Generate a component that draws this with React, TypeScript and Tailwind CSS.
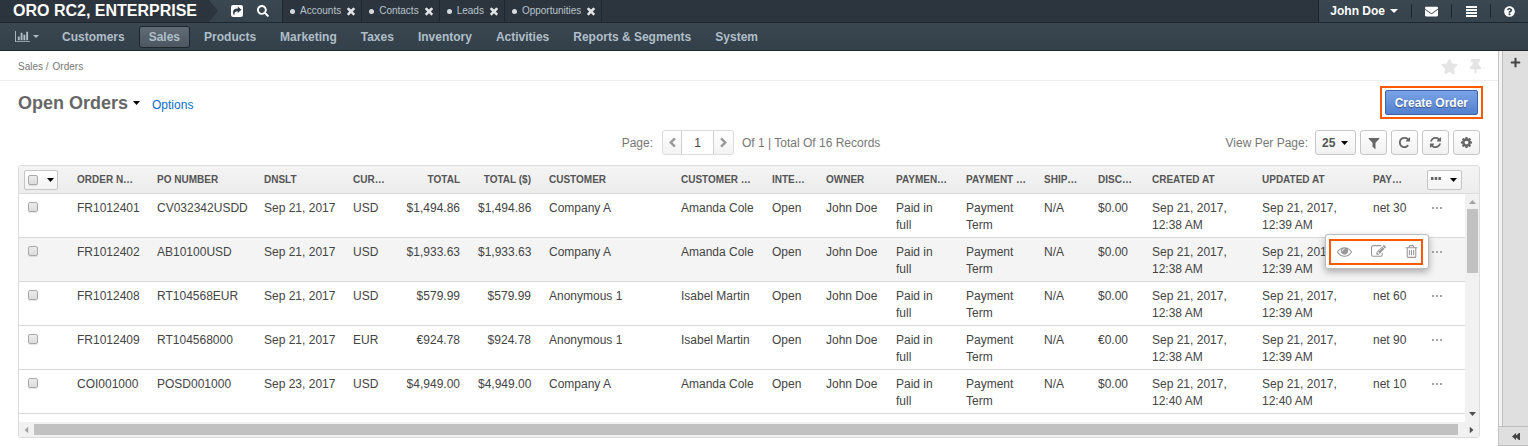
import React from "react";
import { FaEnvelope, FaPlus, FaQuestionCircle, FaSearch, FaStar, FaThumbtack } from "react-icons/fa";

const PATHS = {
  refresh:
    "M1639 1056q0 5-1 7-64 268-268 434.5t-478 166.5q-146 0-282.5-55t-243.5-157l-129 129q-19 19-45 19t-45-19-19-45v-448q0-26 19-45t45-19h448q26 0 45 19t19 45-19 45l-137 137q71 66 161 102t187 36q134 0 250-65t186-179q11-17 53-117 8-23 30-23h192q13 0 22.5 9.5t9.5 22.5zm25-800v448q0 26-19 45t-45 19h-448q-26 0-45-19t-19-45 19-45l138-138q-148-137-349-137-134 0-250 65t-186 179q-11 17-53 117-8 23-30 23h-199q-13 0-22.5-9.5t-9.5-22.5v-7q65-268 270-434.5t480-166.5q146 0 284 55.5t245 156.5l130-129q19-19 45-19t45 19 19 45z",
  repeat:
    "M1664 256v448q0 26-19 45t-45 19h-448q-42 0-59-40-17-39 14-69l138-138q-148-137-349-137-104 0-198.5 40.5t-163.5 109.5-109.5 163.5-40.5 198.5 40.5 198.5 109.5 163.5 163.5 109.5 198.5 40.5q119 0 225-52t179-147q7-10 23-12 15 0 25 9l137 138q9 8 9.5 20.5t-7.5 22.5q-109 132-264 204.5t-327 72.5q-156 0-298-61t-245-164-164-245-61-298 61-298 164-245 245-164 298-61q147 0 284.5 55.5t244.5 156.5l130-129q29-31 70-14 39 17 39 59z",
  edit:
    "M888 1184l116-116-152-152-116 116v56h96v96h56zm440-720q-16-16-33 1l-350 350q-17 17-1 33t33-1l350-350q17-17 1-33zm80 594v190q0 119-84.5 203.5t-203.5 84.5h-832q-119 0-203.5-84.5t-84.5-203.5v-832q0-119 84.5-203.5t203.5-84.5h832q63 0 117 25 15 7 18 23 3 17-9 29l-49 49q-14 14-32 8-23-6-45-6h-832q-66 0-113 47t-47 113v832q0 66 47 113t113 47h832q66 0 113-47t47-113v-126q0-13 9-22l64-64q15-15 35-7t20 29zm-96-738l288 288-672 672h-288v-288zm444 132l-92 92-288-288 92-92q28-28 68-28t68 28l152 152q28 28 28 68t-28 68z",
  trash:
    "M704 736v576q0 14-9 23t-23 9h-64q-14 0-23-9t-9-23v-576q0-14 9-23t23-9h64q14 0 23 9t9 23zm256 0v576q0 14-9 23t-23 9h-64q-14 0-23-9t-9-23v-576q0-14 9-23t23-9h64q14 0 23 9t9 23zm256 0v576q0 14-9 23t-23 9h-64q-14 0-23-9t-9-23v-576q0-14 9-23t23-9h64q14 0 23 9t9 23zm128 724v-948h-896v948q0 22 7 40.5t14.5 27 10.5 8.5h832q3 0 10.5-8.5t14.5-27 7-40.5zm-672-1076h448l-48-117q-7-9-17-11h-317q-10 2-17 11zm928 32v64q0 14-9 23t-23 9h-96v948q0 83-47 143.5t-113 60.5h-832q-66 0-113-58.5t-47-141.5v-952h-96q-14 0-23-9t-9-23v-64q0-14 9-23t23-9h309l70-167q15-37 54-63t79-26h320q40 0 79 26t54 63l70 167h309q14 0 23 9t9 23z",
  filter:
    "M1595 295q17 41-14 70l-493 493v742q0 42-39 59-13 5-25 5-27 0-45-19l-256-256q-19-19-19-45v-486l-493-493q-31-29-14-70 17-39 59-39h1280q42 0 59 39z",
  cog:
    "M1152 896q0-106-75-181t-181-75-181 75-75 181 75 181 181 75 181-75 75-181zm512-109v222q0 12-8 23t-20 13l-185 28q-19 54-39 91 35 50 107 138 10 12 10 25t-9 23q-27 37-99 108t-94 71q-12 0-26-9l-138-108q-44 23-91 38-16 136-29 186-7 28-36 28h-222q-14 0-24.5-8.5t-11.5-21.5l-28-184q-49-16-90-37l-141 107q-10 9-25 9-14 0-25-11-126-114-165-168-7-10-7-23 0-12 8-23 15-21 51-66.5t54-70.5q-27-50-41-99l-183-27q-13-2-21-12.5t-8-23.5v-222q0-12 8-23t19-13l186-28q14-46 39-92-40-57-107-138-10-12-10-24 0-10 9-23 26-36 98.5-107.5t94.5-71.5q13 0 26 10l138 107q44-23 91-38 16-136 29-186 7-28 36-28h222q14 0 24.5 8.5t11.5 21.5l28 184q49 16 90 37l142-107q9-9 24-9 13 0 25 10 129 119 165 170 7 8 7 22 0 12-8 23-15 21-51 66.5t-54 70.5q26 50 41 98l183 28q13 2 21 12.5t8 23.5z",
  eye:
    "M1664 960q-152-236-381-353 61 104 61 225 0 185-131.5 316.5t-316.5 131.5-316.5-131.5-131.5-316.5q0-121 61-225-229 117-381 353 133 205 333.5 326.5t434.5 121.5 434.5-121.5 333.5-326.5zm-720-384q0-20-14-34t-34-14q-125 0-214.5 89.5t-89.5 214.5q0 20 14 34t34 14 34-14 14-34q0-86 61-147t147-61q20 0 34-14t14-34zm848 384q0 34-20 69-140 230-376.5 368.5t-499.5 138.5-499.5-139-376.5-368q-20-35-20-69t20-69q140-229 376.5-368t499.5-139 499.5 139 376.5 368q20 35 20 69z",
  close:
    "M1490 1322q0 40-28 68l-136 136q-28 28-68 28t-68-28l-294-294-294 294q-28 28-68 28t-68-28l-136-136q-28-28-28-68t28-68l294-294-294-294q-28-28-28-68t28-68l136-136q28-28 68-28t68 28l294 294 294-294q28-28 68-28t68 28l136 136q28 28 28 68t-28 68l-294 294 294 294q28 28 28 68z",
};

function Icon({ name, className = "size-[14px]" }: { name: keyof typeof PATHS; className?: string }) {
  return (
    <svg viewBox="0 0 1792 1792" fill="currentColor" className={className} aria-hidden="true">
      <path d={PATHS[name]} />
    </svg>
  );
}

function ChartIcon() {
  return (
    <svg viewBox="0 0 2048 1792" fill="currentColor" className="h-[13px] w-[15px]" aria-hidden="true">
      <path d="M640 896v512h-256v-512h256zm384-512v1024h-256v-1024h256zm1024 1152v128h-2048v-1536h128v1408h1920zm-640-896v768h-256v-768h256zm384-384v1152h-256v-1152h256z" />
    </svg>
  );
}

function ShareIcon() {
  return (
    <svg viewBox="0 0 12 12" className="size-3" aria-hidden="true">
      <rect width="12" height="12" rx="2.2" fill="#fff" />
      <path d="M10.4 4.700 6.800 1.600v1.800C3.600 3.500 2 5 2 7.200c0 1.300.6 2.300 1.500 3-.4-2.500.6-3.800 3.300-3.900v1.700z" fill="#303b45" />
    </svg>
  );
}

function MenuIcon() {
  return (
    <svg viewBox="0 0 11 11" fill="currentColor" className="size-[11px]" aria-hidden="true">
      <path d="M0 0h11v2H0zM0 3h11v2H0zM0 6h11v2H0zM0 9h11v2H0z" />
    </svg>
  );
}

function Caret({ className = "h-1 w-[7px]" }: { className?: string }) {
  return (
    <svg viewBox="0 0 8 4" preserveAspectRatio="none" fill="currentColor" className={className} aria-hidden="true">
      <path d="M0 0h8L4 4z" />
    </svg>
  );
}

function Chevron({ left = false }: { left?: boolean }) {
  return (
    <svg viewBox="0 0 8 12" fill="none" stroke="currentColor" strokeWidth="2.8" className="h-[11px] w-[7px]" aria-hidden="true">
      <path d={left ? "M6.800 1.200 2 6l4.800 4.800" : "M1.200 1.200 6 6l-4.800 4.800"} />
    </svg>
  );
}

function Check({ label }: { label: string }) {
  return (
    <input
      type="checkbox"
      aria-label={label}
      className="block size-[10px] appearance-none rounded-[2px] border border-[#a9a9a9] bg-linear-to-b from-[#ececec] to-[#dcdcdc] shadow-[0_1px_1px_rgba(0,0,0,0.1)]"
    />
  );
}

const pinned = ["Accounts", "Contacts", "Leads", "Opportunities"];
const menu = ["Customers", "Sales", "Products", "Marketing", "Taxes", "Inventory", "Activities", "Reports & Segments", "System"];

type Column = { title: string; col: string; right?: boolean; wrap?: boolean };

const columns: Column[] = [
  { title: "ORDER N…", col: "w-[80px]" },
  { title: "PO NUMBER", col: "w-[107px]" },
  { title: "DNSLT", col: "w-[89px]" },
  { title: "CUR…", col: "w-[49px]" },
  { title: "TOTAL", col: "w-[76px]", right: true },
  { title: "TOTAL ($)", col: "w-[71px]", right: true },
  { title: "CUSTOMER", col: "w-[132px]" },
  { title: "CUSTOMER …", col: "w-[91px]" },
  { title: "INTE…", col: "w-[54px]" },
  { title: "OWNER", col: "w-[70px]" },
  { title: "PAYMEN…", col: "w-[70px]", wrap: true },
  { title: "PAYMENT …", col: "w-[78px]", wrap: true },
  { title: "SHIP…", col: "w-[54px]" },
  { title: "DISC…", col: "w-[54px]" },
  { title: "CREATED AT", col: "w-[110px]", wrap: true },
  { title: "UPDATED AT", col: "w-[111px]", wrap: true },
  { title: "PAY…", col: "w-[59px]" },
];

const rows: string[][] = [
  ["FR1012401", "CV032342USDD", "Sep 21, 2017", "USD", "$1,494.86", "$1,494.86", "Company A", "Amanda Cole", "Open", "John Doe", "Paid in full", "Payment Term", "N/A", "$0.00", "Sep 21, 2017, 12:38 AM", "Sep 21, 2017, 12:39 AM", "net 30"],
  ["FR1012402", "AB10100USD", "Sep 21, 2017", "USD", "$1,933.63", "$1,933.63", "Company A", "Amanda Cole", "Open", "John Doe", "Paid in full", "Payment Term", "N/A", "$0.00", "Sep 21, 2017, 12:38 AM", "Sep 21, 2017, 12:39 AM", ""],
  ["FR1012408", "RT104568EUR", "Sep 21, 2017", "USD", "$579.99", "$579.99", "Anonymous 1", "Isabel Martin", "Open", "John Doe", "Paid in full", "Payment Term", "N/A", "$0.00", "Sep 21, 2017, 12:38 AM", "Sep 21, 2017, 12:39 AM", "net 60"],
  ["FR1012409", "RT104568000", "Sep 21, 2017", "EUR", "€924.78", "$924.78", "Anonymous 1", "Isabel Martin", "Open", "John Doe", "Paid in full", "Payment Term", "N/A", "€0.00", "Sep 21, 2017, 12:38 AM", "Sep 21, 2017, 12:39 AM", "net 90"],
  ["COI001000", "POSD001000", "Sep 23, 2017", "USD", "$4,949.00", "$4,949.00", "Company A", "Amanda Cole", "Open", "John Doe", "Paid in full", "Payment Term", "N/A", "$0.00", "Sep 21, 2017, 12:40 AM", "Sep 21, 2017, 12:40 AM", "net 10"],
];

const toolButton =
  "flex h-[25px] w-[27px] items-center justify-center rounded-[3px] border border-[#c6c6c6] bg-linear-to-b from-white to-[#f1f1f1] text-[#666]";

function TopBar() {
  return (
    <header className="flex h-[23px] border-b border-[#1e262f] bg-linear-to-b from-[#3b4851] to-[#36434d] text-white">
      <h1 className="flex items-center bg-[#2c343d] pr-[3px] pl-[13px] text-[16px] leading-5 font-bold whitespace-nowrap">
        <a href="#home">ORO RC2, ENTERPRISE</a>
      </h1>
      <svg viewBox="0 0 18 22" className="h-[22px] w-[18px] shrink-0" aria-hidden="true">
        <path d="M0 0h9l9 11-9 11H0z" fill="#2c343d" />
      </svg>
      <div className="flex items-center gap-[14px] px-[13px]">
        <button type="button" aria-label="Share"><ShareIcon /></button>
        <button type="button" aria-label="Search"><FaSearch className="size-3" /></button>
      </div>
      <nav className="flex min-w-0 flex-1 border-x border-[#1e262f] bg-[#2c343d] text-[10px] leading-[22px] text-[#b9c4cc]">
        {pinned.map((name) => (
          <div key={name} className="flex items-center border-r border-[#1e262f] pr-1 pl-[7px]">
            <span className="mr-[5px] size-[5px] rounded-full bg-[#d5dade]" />
            <a href={"#" + name}>{name}</a>
            <button type="button" aria-label={"Close " + name} className="ml-1 text-[#dfe3e6]">
              <Icon name="close" className="size-[12px]" />
            </button>
          </div>
        ))}
      </nav>
      <div className="flex items-center text-[12px] font-bold">
        <button type="button" className="flex items-center gap-[5px] pr-[13px] pl-[11px]">
          John Doe <Caret className="h-[4px] w-2" />
        </button>
        <button type="button" aria-label="Messages" className="flex h-[14px] w-10 items-center justify-center border-l border-[#1e262f]">
          <FaEnvelope className="size-[13px]" />
        </button>
        <button type="button" aria-label="Menu" className="flex h-[14px] w-[39px] items-center justify-center border-l border-[#1e262f]">
          <MenuIcon />
        </button>
        <button type="button" aria-label="Help" className="flex h-[14px] w-[38px] items-center justify-center border-l border-[#1e262f]">
          <FaQuestionCircle className="size-[11px]" />
        </button>
      </div>
    </header>
  );
}

function MainMenu() {
  return (
    <nav className="flex h-7 items-center border-b border-[#1e262f] bg-linear-to-b from-[#3a4750] to-[#33404a] pl-[15px] text-[12px] font-bold whitespace-nowrap text-[#b0bec8]">
      <button type="button" aria-label="Dashboards" className="mr-[11px] flex items-center gap-[3px]">
        <ChartIcon />
        <Caret className="h-[3px] w-[6px]" />
      </button>
      {menu.map((name) => (
        <a
          key={name}
          href={"#" + name}
          className={
            name === "Sales"
              ? "mx-[2px] h-[22px] rounded-[3px] border border-[#1d252d] bg-linear-to-b from-[#606b76] to-[#4c5762] px-[9px] leading-5"
              : "px-3 leading-[22px]"
          }
        >
          {name}
        </a>
      ))}
    </nav>
  );
}

function RowActions() {
  return (
    <div className="absolute -top-1 right-9 z-10 w-[104px] rounded-[3px] border border-[#bbb] bg-white px-[3px] pt-1 pb-[3px] shadow-[0_3px_7px_rgba(0,0,0,0.3)]">
      <div className="flex h-[26px] w-[94px] items-center justify-between border-2 border-[#ff5a00] pr-[2px] pl-[6px] pb-[2px] text-[#999]">
        <button type="button" aria-label="View"><Icon name="eye" className="size-[15px]" /></button>
        <button type="button" aria-label="Edit"><Icon name="edit" className="size-[15px]" /></button>
        <button type="button" aria-label="Delete"><Icon name="trash" className="size-[15px]" /></button>
      </div>
    </div>
  );
}

function Grid() {
  return (
    <section className="overflow-hidden rounded-[3px] border border-[#dcdcdc] text-[#444]">
      <div className="flex">
        <div className="min-w-0 flex-1">
          <table className="w-full table-fixed border-separate border-spacing-0 text-left text-[12px] leading-[17px]">
            <colgroup>
              <col className="w-[49px]" />
              {columns.map((c, i) => <col key={i} className={c.col} />)}
              <col className="w-[42px]" />
            </colgroup>
            <thead className="text-[10px] text-[#555]">
              <tr className="h-7 bg-linear-to-b from-[#f4f4f4] to-[#ececec]">
                <th className="border-b border-[#dcdcdc] pl-[5px]">
                  <div className="flex h-5 w-[34px] items-center justify-between rounded-[2px] border border-[#c4c4c4] bg-linear-to-b from-white to-[#f3f3f3] px-[3px] text-black">
                    <Check label="Select all" />
                    <button type="button" aria-label="Selection options"><Caret className="h-[4px] w-[7px]" /></button>
                  </div>
                </th>
                {columns.map((c, i) => (
                  <th key={i} className={"border-b border-[#dcdcdc] px-[9px] whitespace-nowrap " + (c.right ? "text-right" : "")}>
                    {c.title}
                  </th>
                ))}
                <th className="border-b border-[#dcdcdc] pl-1">
                  <button type="button" aria-label="Row actions" className="flex h-5 w-[35px] items-center justify-between rounded-[2px] border border-[#c4c4c4] bg-linear-to-b from-white to-[#f3f3f3] pr-1 pl-[3px] text-black">
                    <svg viewBox="0 0 10 3" className="mb-[2px] h-[3px] w-[10px]" fill="#666" aria-hidden="true">
                      <path d="M0 0h2.500v3H0zM3.700 0h2.500v3H3.700zM7.400 0h2.500v3H7.400z" />
                    </svg>
                    <Caret className="h-[4px] w-[7px]" />
                  </button>
                </th>
              </tr>
            </thead>
            <tbody>
              {rows.map((row, r) => (
                <tr key={row[0]} className={"h-11 align-top " + (r === 1 ? "bg-[#f4f4f4]" : "bg-white")}>
                  <td className="border-b border-[#d9d9d9] pt-2 pl-[9px]">
                    <Check label={"Select " + row[0]} />
                  </td>
                  {row.map((value, i) => (
                    <td
                      key={i}
                      className={
                        "border-b border-[#d9d9d9] px-[9px] pt-[6px] " +
                        (columns[i].right ? "text-right " : "") +
                        (columns[i].wrap ? "" : "whitespace-nowrap")
                      }
                    >
                      {value}
                    </td>
                  ))}
                  <td className="relative border-b border-[#d9d9d9] pt-[13px] pl-[9px]">
                    <button type="button" aria-label="More" className="flex gap-[2px]">
                      <span className="size-[2px] bg-[#a5a5a5]" />
                      <span className="size-[2px] bg-[#a5a5a5]" />
                      <span className="size-[2px] bg-[#a5a5a5]" />
                    </button>
                    {r === 1 && <RowActions />}
                  </td>
                </tr>
              ))}
            </tbody>
          </table>
          <div className="h-2" />
        </div>
        <div className="flex w-[14px] flex-col bg-[#f1f1f1]">
          <div className="h-7 border-b border-[#dcdcdc] bg-linear-to-b from-[#f4f4f4] to-[#ececec]" />
          <div className="flex flex-1 flex-col items-center pt-[6px] pb-[6px] text-[#505050]">
            <Caret className="h-[4px] w-[7px] rotate-180 text-[#a3a3a3]" />
            <div className="mt-[5px] h-16 w-[11px] bg-[#c1c1c1]" />
            <Caret className="mt-auto h-[4px] w-[7px]" />
          </div>
        </div>
      </div>
      <div className="flex h-[15px] items-center bg-[#f1f1f1] px-1 text-[#505050]">
        <Caret className="h-[4px] w-[7px] rotate-90 text-[#a3a3a3]" />
        <div className="mr-[10px] ml-1 h-[11px] flex-1 bg-[#c1c1c1]" />
        <Caret className="h-[4px] w-[7px] -rotate-90" />
      </div>
    </section>
  );
}

export default function App() {
  return (
    <div className="flex min-h-screen flex-col bg-white font-['Liberation_Sans',Arial,sans-serif] text-[12px] text-[#444]">
      <TopBar />
      <MainMenu />
      <div className="flex flex-1">
        <main className="min-w-0 flex-1">
          <div className="flex h-[30px] items-center justify-between border-b border-[#efefef] pt-[2px] pr-[15px] pl-[18px] text-[10px] text-[#777]">
            <div className="flex gap-1">
              <span><a href="#sales">Sales</a> /</span>
              <a href="#orders">Orders</a>
            </div>
            <div className="flex items-center gap-[10px] text-[#e4e4e4]">
              <button type="button" aria-label="Favorite"><FaStar className="size-[17px]" /></button>
              <button type="button" aria-label="Pin"><FaThumbtack className="size-[15px]" /></button>
            </div>
          </div>
          <div className="px-[18px] pt-[5px] pb-2">
            <div className="flex h-[33px] items-center justify-between">
              <div className="flex items-center">
                <h2 className="text-[18px] leading-6 font-bold text-[#666]">Open Orders</h2>
                <button type="button" aria-label="Views" className="mr-3 ml-[5px] text-black"><Caret /></button>
                <a href="#options" className="pt-1 text-[#0b6cc9]">Options</a>
              </div>
              <div className="-mr-[3px] border-2 border-[#ff5a00] px-[3px] py-[2px]">
                <button type="button" className="block h-[25px] rounded-[2px] border border-[#3f64a5] bg-linear-to-b from-[#7ba3e6] to-[#5280cf] px-[9px] leading-6 font-bold whitespace-nowrap text-white [text-shadow:0_1px_1px_rgba(0,0,0,0.4)]">
                  Create Order
                </button>
              </div>
            </div>
            <div className="mt-[11px] mb-[10px] grid h-[25px] grid-cols-[1fr_auto_1fr] items-center text-[#777]">
              <div />
              <div className="flex items-center pl-1">
                <label htmlFor="page">Page:</label>
                <div className="mr-2 ml-[9px] flex h-[25px] rounded-[3px] border border-[#dcdcdc] bg-linear-to-b from-white to-[#f3f3f3] text-[#999]">
                  <button type="button" aria-label="Previous page" className="flex w-[18px] items-center justify-center"><Chevron left /></button>
                  <input id="page" defaultValue="1" className="w-[33px] border-x border-[#d0d0d0] bg-white text-center text-[#444]" />
                  <button type="button" aria-label="Next page" className="flex w-[19px] items-center justify-center"><Chevron /></button>
                </div>
                <span>Of 1 | Total Of 16 Records</span>
              </div>
              <div className="flex items-center justify-end gap-1">
                <label htmlFor="per-page" className="mr-[3px]">View Per Page:</label>
                <div className="relative text-black">
                  <select id="per-page" className="block h-[25px] w-[41px] appearance-none rounded-[3px] border border-[#c6c6c6] bg-linear-to-b from-white to-[#f1f1f1] pl-[6px] font-bold text-[#555]">
                    <option>25</option>
                  </select>
                  <Caret className="pointer-events-none absolute top-[11px] right-2 h-[4px] w-[7px]" />
                </div>
                <button type="button" aria-label="Filters" className={toolButton}><Icon name="filter" /></button>
                <button type="button" aria-label="Refresh" className={toolButton}><Icon name="repeat" className="size-[13px]" /></button>
                <button type="button" aria-label="Reset" className={toolButton}><Icon name="refresh" className="size-[13px]" /></button>
                <button type="button" aria-label="Grid settings" className={toolButton}><Icon name="cog" className="size-[13px]" /></button>
              </div>
            </div>
            <Grid />
          </div>
        </main>
        <aside className="flex w-[30px] flex-col border-l border-[#c4c4c4] bg-[#f3f3f3] text-[#444]">
          <div className="ml-[3px] flex flex-1 justify-center border-l border-[#bdbdbd] bg-[#dfdfdf] pt-[6px]">
            <button type="button" aria-label="Add widget" className="flex size-[11px]"><FaPlus className="size-[11px]" /></button>
          </div>
          <button type="button" aria-label="Expand sidebar" className="flex h-5 items-center justify-center border-y border-[#bdbdbd] bg-[#dfdfdf] pl-1">
            <svg viewBox="0 0 8 7" fill="currentColor" className="h-[7px] w-2" aria-hidden="true">
              <path d="M4 0v2.500L7 0h1v7H7L4 4.500V7L0 3.500z" />
            </svg>
          </button>
        </aside>
      </div>
    </div>
  );
}
